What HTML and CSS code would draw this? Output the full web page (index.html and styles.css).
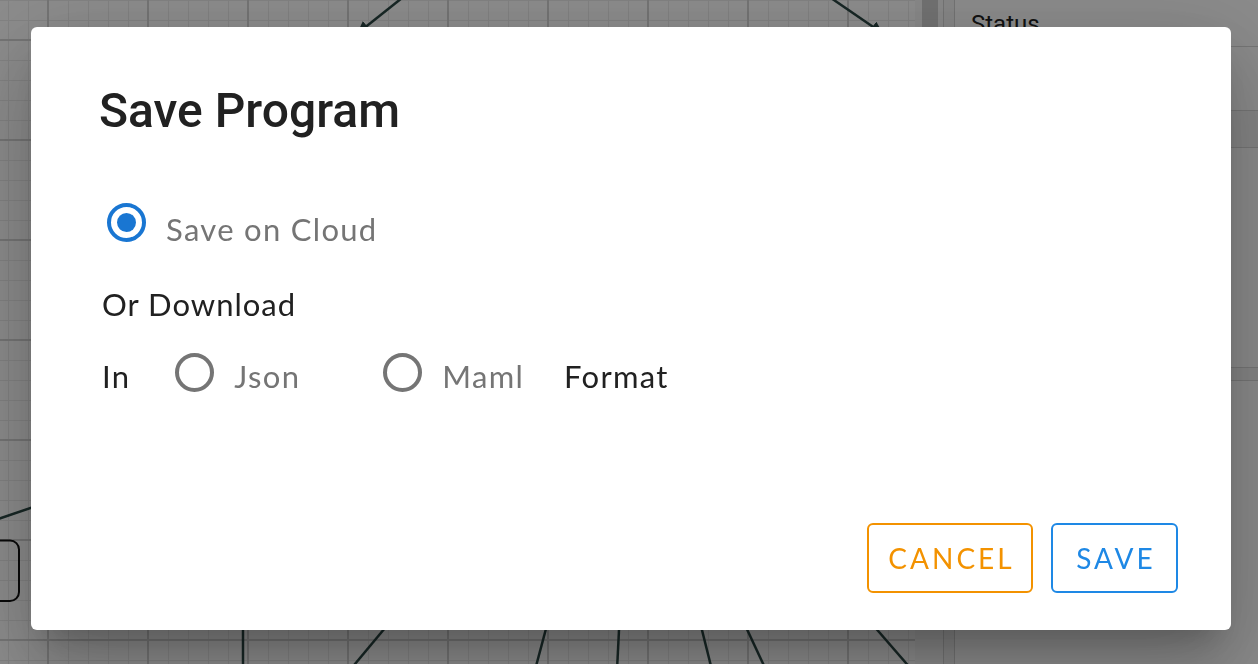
FILE: index.html
```html
<!DOCTYPE html>
<html lang="en">
<head>
<meta charset="utf-8">
<title>Save Program</title>
<link rel="stylesheet" href="styles.css">
</head>
<body>
<div class="app">
  <div class="canvas">
    <svg class="edges" width="915" height="664" viewBox="0 0 915 664">
      <defs>
        <marker id="arrow" viewBox="0 0 10 10" refX="9" refY="5" markerWidth="5" markerHeight="5" orient="auto-start-reverse">
          <path d="M0 0 L10 5 L0 10 z" fill="#2b4744"/>
        </marker>
      </defs>
      <g class="edge">
        <line x1="402" y1="-2" x2="358" y2="33" marker-end="url(#arrow)"/>
        <line x1="831" y1="-2" x2="882" y2="33" marker-end="url(#arrow)"/>
        <line x1="-2" y1="519" x2="60" y2="498"/>
        <line x1="243" y1="600" x2="243" y2="670"/>
        <line x1="400" y1="610" x2="350" y2="670"/>
        <line x1="551" y1="610" x2="535" y2="670"/>
        <line x1="620" y1="610" x2="617" y2="670"/>
        <line x1="697" y1="610" x2="712" y2="670"/>
        <line x1="738" y1="610" x2="766" y2="670"/>
        <line x1="860" y1="610" x2="912" y2="670"/>
      </g>
      <rect class="node" x="-40" y="540.5" width="59" height="60.5" rx="9"/>
    </svg>
  </div>
  <div class="scrolltrack"><div class="thumb"></div></div>
  <div class="divider"></div>
  <aside class="panel">
    <div class="panel-head">Status</div>
    <div class="panel-gap"></div>
    <div class="panel-band"></div>
    <div class="panel-body"></div>
    <div class="panel-band panel-band-thin"></div>
  </aside>
</div>

<div class="modal">
  <div class="dialog" role="dialog" aria-labelledby="dlg-title">
    <h2 class="title" id="dlg-title">Save Program</h2>

    <div class="row row-cloud">
      <span class="radio radio-checked"></span>
      <span class="label label-muted">Save on Cloud</span>
    </div>

    <div class="label download">Or Download</div>

    <div class="row row-format">
      <span class="label">In</span>
      <span class="radio radio-json"></span>
      <span class="label label-muted label-opt">Json</span>
      <span class="radio radio-maml"></span>
      <span class="label label-muted label-opt">Maml</span>
      <span class="label label-format">Format</span>
    </div>

    <div class="actions">
      <button class="btn btn-cancel">CANCEL</button>
      <button class="btn btn-save">SAVE</button>
    </div>
  </div>
</div>
</body>
</html>
```

FILE: styles.css
```css
html, body {
  margin: 0;
  padding: 0;
}

body {
  width: 1258px;
  height: 664px;
  overflow: hidden;
  font-family: Lato, "Open Sans", sans-serif;
}

/* ---------- background application ---------- */
.app {
  display: flex;
  height: 664px;
}

.canvas {
  position: relative;
  width: 915px;
  flex: none;
  background-color: #fff;
  background-image:
    linear-gradient(to right, #d4d4d4 2px, transparent 2px),
    linear-gradient(to bottom, #d4d4d4 2px, transparent 2px),
    linear-gradient(to right, #ececec 1px, transparent 1px),
    linear-gradient(to bottom, #ececec 1px, transparent 1px);
  background-size: 100px 100px, 100px 100px, 20px 20px, 20px 20px;
  background-position: 47px 0, 0 39px, 8px 0, 0 0;
}

.edges {
  position: absolute;
  left: 0;
  top: 0;
  overflow: visible;
}

.edge line {
  stroke: #2b4744;
  stroke-width: 2.5;
}

.node {
  fill: none;
  stroke: #111;
  stroke-width: 2;
}

.scrolltrack {
  width: 28px;
  flex: none;
  background: #f8f8f8;
  padding-left: 7px;
  box-sizing: border-box;
}

.thumb {
  width: 16px;
  height: 420px;
  background: #cfcfcf;
}

.divider {
  width: 12px;
  flex: none;
  box-sizing: border-box;
  background: #f3f3f3;
  border-left: 1px solid #d2d2d2;
  border-right: 1px solid #d2d2d2;
}

.panel {
  flex: 1;
  background: #fdfdfd;
  display: flex;
  flex-direction: column;
}

.panel-head {
  height: 47px;
  box-sizing: border-box;
  padding: 9px 0 0 16px;
  font: 400 24px/30px Roboto, sans-serif;
  color: #222;
  border-bottom: 1px solid #d6d6d6;
}

.panel-gap {
  height: 63px;
  border-bottom: 1px solid #d6d6d6;
}

.panel-band {
  height: 36px;
  background: #f2f2f2;
  border-bottom: 1px solid #d6d6d6;
}

.panel-body {
  height: 219px;
  border-bottom: 1px solid #d6d6d6;
}

.panel-band-thin {
  height: 12px;
}

/* ---------- modal ---------- */
.modal {
  position: fixed;
  inset: 0;
  background: rgba(0, 0, 0, 0.45);
  display: flex;
  align-items: flex-start;
}

.dialog {
  margin: 27px 0 0 31px;
  width: 1200px;
  height: 603px;
  box-sizing: border-box;
  padding: 0 53px 37px 71px;
  background: #fff;
  border-radius: 6px;
  box-shadow:
    0 22px 30px -14px rgba(0, 0, 0, 0.2),
    0 48px 76px 6px rgba(0, 0, 0, 0.14),
    0 18px 92px 16px rgba(0, 0, 0, 0.12);
  display: flex;
  flex-direction: column;
}

.title {
  margin: 56px 0 0 -3px;
  font: 500 48px/56px Roboto, sans-serif;
  color: #212121;
}

.row {
  display: flex;
  align-items: flex-start;
}

.radio {
  flex: none;
  width: 39px;
  height: 39px;
  box-sizing: border-box;
  border-radius: 50%;
  border: 4px solid #757575;
  display: flex;
  align-items: center;
  justify-content: center;
}

.radio-checked {
  border-color: #1976d2;
}

.radio-checked::after {
  content: "";
  width: 19px;
  height: 19px;
  border-radius: 50%;
  background: #1976d2;
}

.label {
  font-size: 31px;
  line-height: 37px;
  letter-spacing: 1.3px;
  color: #212121;
  white-space: nowrap;
}

.label-muted {
  color: #757575;
}

.row-cloud {
  margin-top: 64px;
}

.row-cloud .radio {
  margin-left: 5px;
}

.row-cloud .label {
  margin: 8px 0 0 20px;
}

.download {
  margin-top: 38px;
  letter-spacing: 1px;
}

.row-format {
  margin-top: 30px;
}

.row-format .label {
  margin-top: 5px;
}

.radio-json {
  margin-left: 45px;
}

.radio-maml {
  margin-left: 83px;
}

.label-opt {
  margin-left: 20px;
}

.label-format {
  margin-left: 40px;
}

.actions {
  margin-top: auto;
  display: flex;
  justify-content: flex-end;
  gap: 18px;
}

.btn {
  height: 70px;
  box-sizing: border-box;
  border: 2px solid currentColor;
  border-radius: 6px;
  background: #fff;
  font: 400 28px/1 Lato, sans-serif;
  letter-spacing: 3px;
  padding: 0 0 0 3px;
  display: flex;
  align-items: center;
  justify-content: center;
  cursor: pointer;
}

.btn-cancel {
  width: 166px;
  color: #f39200;
}

.btn-save {
  width: 127px;
  color: #1e88e5;
}
```
